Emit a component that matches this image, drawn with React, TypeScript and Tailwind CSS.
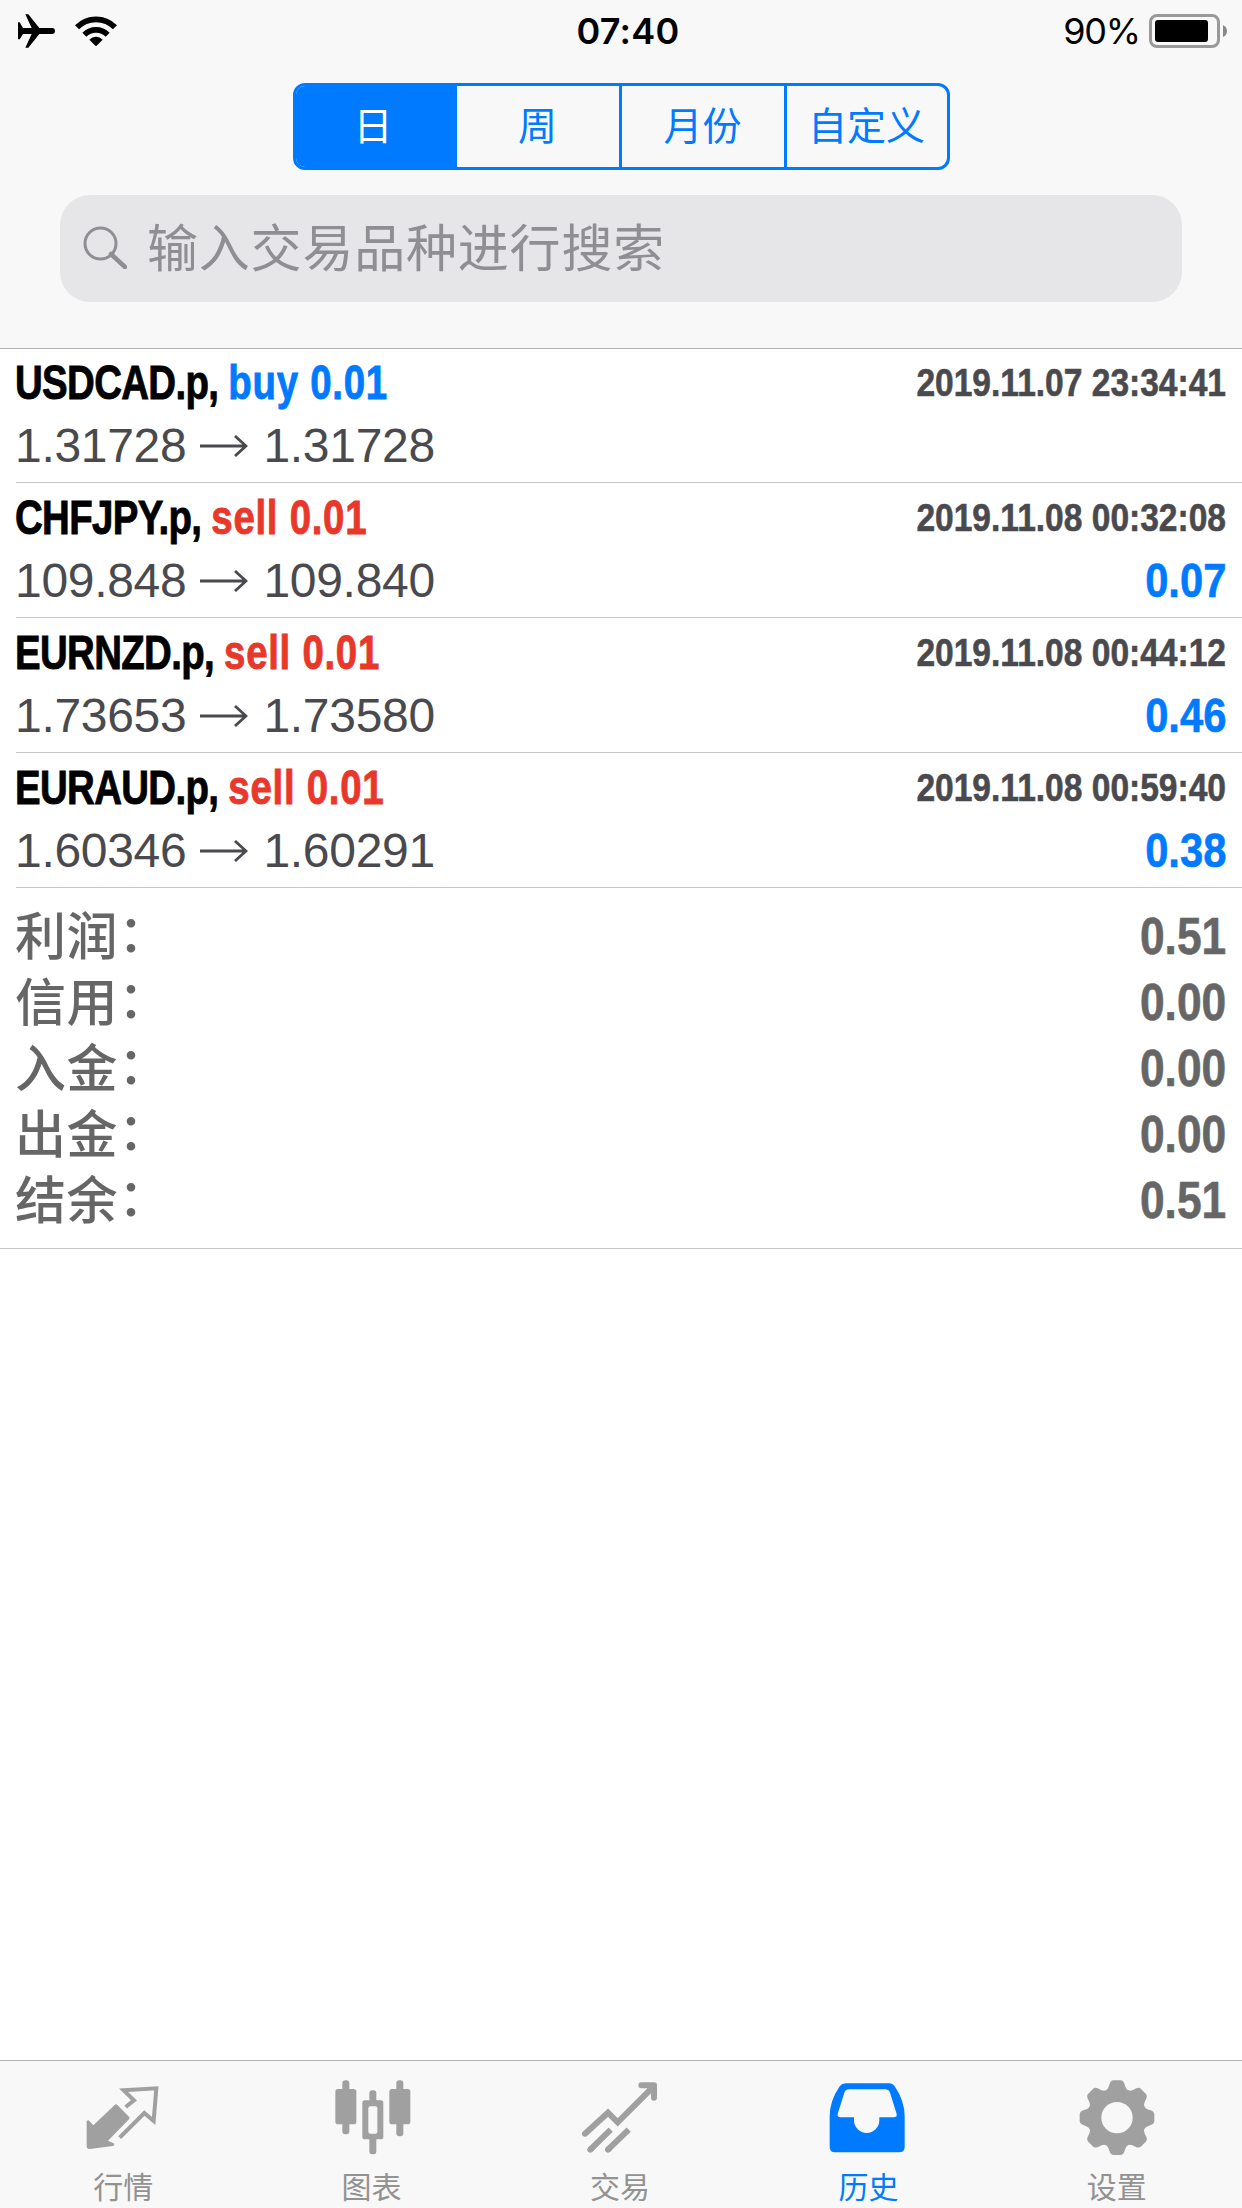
type Deal = {
  symbol: string
  side: "buy" | "sell"
  open: string
  close: string
  time: string
  profit?: string
}

const periods = ["日", "周", "月份", "自定义"]

const deals: Deal[] = [
  { symbol: "USDCAD.p", side: "buy", open: "1.31728", close: "1.31728", time: "2019.11.07 23:34:41" },
  { symbol: "CHFJPY.p", side: "sell", open: "109.848", close: "109.840", time: "2019.11.08 00:32:08", profit: "0.07" },
  { symbol: "EURNZD.p", side: "sell", open: "1.73653", close: "1.73580", time: "2019.11.08 00:44:12", profit: "0.46" },
  { symbol: "EURAUD.p", side: "sell", open: "1.60346", close: "1.60291", time: "2019.11.08 00:59:40", profit: "0.38" },
]

const totals = [
  { label: "利润", value: "0.51" },
  { label: "信用", value: "0.00" },
  { label: "入金", value: "0.00" },
  { label: "出金", value: "0.00" },
  { label: "结余", value: "0.51" },
]

function StatusBar() {
  return (
    <div className="grid h-[62px] grid-cols-3 items-center pl-[18px] pr-[14px] font-['Inter',sans-serif] text-[36px] leading-none text-black">
      <div className="flex items-center gap-[20px]">
        <svg className="h-[34px] w-[37px]" viewBox="0 0 111 102">
          <path d="M22 1h9l33 41h38q9 0 9 9t-9 9H64L31 101h-9l19-41H15L5 76H0V25h5l10 17h26z" />
        </svg>
        <svg className="h-[30px] w-[42px]" viewBox="0 0 126 90" fill="none" stroke="#000" strokeWidth="17">
          <path d="M6 34a80 80 0 0 1 114 0" />
          <path d="M28 56a50 50 0 0 1 70 0" />
          <path d="M43 71a28 28 0 0 1 40 0L63 91z" fill="#000" stroke="none" />
        </svg>
      </div>
      <div className="pl-[10px] text-center font-semibold tracking-[0.2px]">07:40</div>
      <div className="flex items-center justify-end">
        <span className="tracking-[-1.2px]">90%</span>
        <svg className="ml-[9px] h-[34px] w-[79px]" viewBox="0 0 79 34">
          <rect x="1.5" y="1.5" width="68" height="31" rx="6.5" fill="none" stroke="#999" strokeWidth="3" />
          <rect x="6" y="6" width="53" height="22" rx="3" />
          <path d="M74 11q4 2 4 6t-4 6z" fill="#888" />
        </svg>
      </div>
    </div>
  )
}

function Header() {
  return (
    <header className="h-[349px] shrink-0 border-b border-[#b2b2b2] bg-[#f8f8f8]">
      <StatusBar />
      <div className="mx-auto mt-[21px] grid h-[87px] w-[657px] grid-cols-[161px_165px_165px_1fr] divide-x-3 divide-[#007aff] overflow-hidden rounded-[12px] border-3 border-[#007aff] text-[39px] leading-none text-[#007aff]">
        {periods.map((name, i) => (
          <button
            key={name}
            className={`flex items-center justify-center pb-[6px] ${i === 0 ? "bg-[#007aff] pr-[3px] text-white" : ""}`}
          >
            {name}
          </button>
        ))}
      </div>
      <div className="mx-[60px] mt-[25px] flex h-[107px] items-center rounded-[30px] bg-[#e6e6e8] pl-[23px] text-[51px] leading-none text-[#8e8e93]">
        <svg className="mb-[2px] h-[43px] w-[44px]" viewBox="0 0 44 43" fill="none" stroke="#8e8e93">
          <circle cx="17.5" cy="17.5" r="15.5" strokeWidth="3" />
          <path d="M28 28l14 13" strokeWidth="4.5" strokeLinecap="round" />
        </svg>
        <span className="ml-[20px] pb-[7px] tracking-[0.8px]">输入交易品种进行搜索</span>
      </div>
    </header>
  )
}

function DealRow({ deal }: { deal: Deal }) {
  return (
    <li className="ml-[16px] h-[135px] border-b border-[#c8c7cc] pr-[16px] pt-[6px] first:h-[134px] first:pt-[5px]">
      <div className="flex h-[58px] items-center justify-between font-['Liberation_Sans',sans-serif] font-bold">
        <div className="-ml-[1px] origin-left scale-x-80 text-[48px] leading-[56px] [-webkit-text-stroke:0.9px]">
          <span className="tracking-[-0.8px] text-black">{deal.symbol}, </span>
          <span className={`tracking-[0.9px] ${deal.side === "buy" ? "text-[#007aff]" : "text-[#e8382b]"}`}>
            {deal.side} 0.01
          </span>
        </div>
        <div className="origin-right scale-x-86 text-[39px] leading-[54px] text-[#4a4a4e] [-webkit-text-stroke:0.6px]">
          {deal.time}
        </div>
      </div>
      <div className="flex h-[67px] items-center justify-between">
        <div className="-ml-[1px] flex items-center font-['Liberation_Sans',sans-serif] text-[48px] leading-[64px] text-[#4a4a4e]">
          <span className="tracking-[-0.3px]">{deal.open}</span>
          <svg className="ml-[14px] mr-[15px] h-[22px] w-[48px]" viewBox="0 0 48 22" fill="none" stroke="#4a4a4e" strokeWidth="2.8">
            <path d="M0 11h46M35 1l11 10-11 10" />
          </svg>
          <span className="tracking-[-0.3px]">{deal.close}</span>
        </div>
        {deal.profit && (
          <div className="origin-right scale-x-87 font-['Liberation_Sans',sans-serif] text-[48px] font-bold leading-[64px] text-[#007aff] [-webkit-text-stroke:0.6px]">
            {deal.profit}
          </div>
        )}
      </div>
    </li>
  )
}

function Totals() {
  return (
    <div className="h-[361px] border-b border-[#c8c7cc] pl-[15px] pr-[16px] pt-[15px] text-[#666]">
      {totals.map((row) => (
        <div key={row.label} className="flex h-[66px] items-center justify-between">
          <span className="flex pb-[5px] text-[51px] font-medium leading-[61px] tracking-[0.6px]">
            {row.label}
            <span className="-mt-[3px] mb-[3px]">：</span>
          </span>
          <span className="origin-right scale-x-87 pt-[2px] font-['Liberation_Sans',sans-serif] text-[51px] font-bold leading-[64px] [-webkit-text-stroke:0.6px]">
            {row.value}
          </span>
        </div>
      ))}
    </div>
  )
}

function QuotesIcon() {
  return (
    <svg className="size-20 overflow-visible" viewBox="0 0 240 240" fill="#a0a0a0">
      <path d="M92 84q4-4 8 0l35 35q4 4 0 8l-63 64 17 8q5 6-3 8l-68 9q-10 1-10-9v-76l6-1 14 15z" />
      <path d="M125 90l25-20-31-30 98-6-8 98-28-24-74 74" fill="none" stroke="#a0a0a0" strokeWidth="12" />
    </svg>
  )
}

function ChartsIcon() {
  return (
    <svg className="size-20 overflow-visible" viewBox="0 0 240 240" fill="#a0a0a0">
      <rect x="28" y="10" width="21" height="162" rx="9" />
      <rect x="7" y="36" width="63" height="106" rx="8" />
      <rect x="190" y="10" width="21" height="168" rx="9" />
      <rect x="169" y="36" width="63" height="106" rx="8" />
      <rect x="109" y="40" width="21" height="192" rx="9" />
      <rect x="88" y="70" width="63" height="117" rx="8" />
      <rect x="106" y="88" width="27" height="82" rx="6" fill="#f8f8f8" />
    </svg>
  )
}

function TradeIcon() {
  return (
    <svg className="size-20 overflow-visible" viewBox="0 0 240 240" fill="none" stroke="#a0a0a0" strokeWidth="18" strokeLinecap="round">
      <path d="M12 170l69-63 29 29L218 28" />
      <path d="M181 25h38v37" strokeLinejoin="round" />
      <path d="M205 28l11 11" />
      <path d="M28 218l61-60M81 218l62-60" strokeLinecap="butt" />
      <path d="M28 218l4-4M81 218l4-4" />
    </svg>
  )
}

function HistoryIcon() {
  return (
    <svg className="size-20 overflow-visible" viewBox="0 0 240 240">
      <path
        d="M50 19h130q11 0 17 9 30 44 30 90v92q0 16-16 16H18q-16 0-16-16v-92q0-46 30-90 7-9 18-9z"
        fill="#007aff"
      />
      <path d="M61 37h107q11 0 15 10l20 64q2 10-9 10h-43v9a38 38 0 0 1-76 0v-9H35q-11 0-9-10l20-64q4-10 15-10z" fill="#f8f8f8" />
    </svg>
  )
}

function SettingsIcon() {
  return (
    <svg className="size-20 overflow-visible" viewBox="0 0 240 240">
      <g fill="#a0a0a0" transform="translate(117 122)">
        <circle r="89" />
        {[0, 45, 90, 135, 180, 225, 270, 315].map((deg) => (
          <path key={deg} d="M-42-76q14-6 18-20 4-16 14-16h20q10 0 14 16 4 14 18 20z" transform={`rotate(${deg})`} />
        ))}
      </g>
      <circle cx="117" cy="122" r="47" fill="#f8f8f8" />
    </svg>
  )
}

const tabs = [
  { name: "行情", icon: QuotesIcon },
  { name: "图表", icon: ChartsIcon },
  { name: "交易", icon: TradeIcon },
  { name: "历史", icon: HistoryIcon, active: true },
  { name: "设置", icon: SettingsIcon },
]

function TabBar() {
  return (
    <nav className="grid h-[148px] shrink-0 grid-cols-5 border-t border-[#b2b2b2] bg-[#f8f8f8]">
      {tabs.map((tab) => (
        <a key={tab.name} className={`flex flex-col items-center pt-[16px] ${tab.active ? "text-[#007aff]" : "text-[#929292]"}`}>
          <tab.icon />
          <span className="mt-[11px] pr-[2px] text-[30px] leading-[34px]">{tab.name}</span>
        </a>
      ))}
    </nav>
  )
}

export default function App() {
  return (
    <div className="flex h-[2208px] w-[1242px] flex-col overflow-hidden bg-white font-['Noto_Sans_CJK_SC',sans-serif]">
      <Header />
      <main className="flex-1">
        <ul>
          {deals.map((deal) => (
            <DealRow key={deal.symbol} deal={deal} />
          ))}
        </ul>
        <Totals />
      </main>
      <TabBar />
    </div>
  )
}
